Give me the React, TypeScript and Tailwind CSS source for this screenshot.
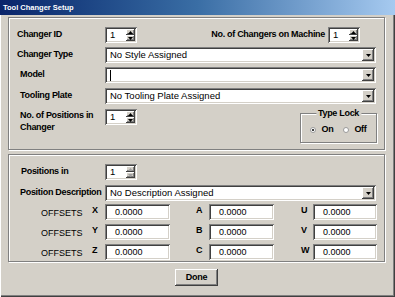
import React from 'react';

// Win2000-style 3D borders
const SUNKEN =
  'bg-white shadow-[inset_1px_1px_0_#808080,inset_-1px_-1px_0_#ffffff,inset_2px_2px_0_#404040,inset_-2px_-2px_0_#d4d0c8]';
const RAISED =
  'bg-[#d4d0c8] shadow-[inset_-1px_-1px_0_#404040,inset_1px_1px_0_#ffffff,inset_-2px_-2px_0_#808080,inset_2px_2px_0_#d4d0c8]';
const ETCHED = 'border border-[#808080] shadow-[1px_1px_0_#ffffff,inset_1px_1px_0_#ffffff]';

const LABEL = 'font-bold text-[9px] tracking-[-0.3px] text-black whitespace-nowrap';

function Arrow({ dir, disabled }: { dir: 'up' | 'down'; disabled?: boolean }) {
  const color = disabled ? '#a0a0a0' : '#000000';
  return (
    <svg width="5" height="3" viewBox="0 0 5 3">
      {dir === 'up' ? <path d="M2.5 0L5 3H0Z" fill={color} /> : <path d="M0 0H5L2.5 3Z" fill={color} />}
    </svg>
  );
}

function Spinner({ value, disabled }: { value: string; disabled?: boolean }) {
  return (
    <div className={`${SUNKEN} w-[32px] h-[16px] flex shrink-0`}>
      <div className="flex-1 pl-[5px] flex items-center text-[9.5px] leading-none">{value}</div>
      <div className="w-[11px] py-[2px] pr-[2px] flex flex-col">
        <div className={`${RAISED} flex-1 flex items-center justify-center`}>
          <Arrow dir="up" disabled={disabled} />
        </div>
        <div className={`${RAISED} flex-1 flex items-center justify-center`}>
          <Arrow dir="down" disabled={disabled} />
        </div>
      </div>
    </div>
  );
}

function Dropdown({ value, caret }: { value: string; caret?: boolean }) {
  return (
    <div className={`${SUNKEN} w-[271px] h-[16px] flex shrink-0`}>
      <div className="flex-1 pl-[5px] flex items-center text-[9.5px] leading-none whitespace-nowrap">
        {caret ? <span className="w-px h-[11px] bg-black" /> : value}
      </div>
      <div className="p-[2px] flex">
        <div className={`${RAISED} w-[12px] flex items-center justify-center`}>
          <Arrow dir="down" />
        </div>
      </div>
    </div>
  );
}

function ValueBox({ value, w = 'w-[65px]' }: { value: string; w?: string }) {
  return (
    <div className={`${SUNKEN} ${w} h-[16px] flex items-center pl-[10px] text-[9px] leading-none shrink-0`}>
      {value}
    </div>
  );
}

function Radio({ checked, label }: { checked?: boolean; label: string }) {
  return (
    <div className="flex items-center gap-[5px]">
      <div className="w-[6px] h-[6px] rounded-full bg-white border border-[#9a9a9a] flex items-center justify-center">
        {checked && <div className="w-[2px] h-[2px] rounded-full bg-black" />}
      </div>
      <span className={LABEL}>{label}</span>
    </div>
  );
}

const OFFSET_ROWS = [
  ['X', 'A', 'U'],
  ['Y', 'B', 'V'],
  ['Z', 'C', 'W'],
];

export default function App() {
  return (
    <div
      className="w-[395px] h-[297px] bg-[#d4d0c8] overflow-hidden flex flex-col shadow-[inset_1px_1px_0_#ffffff,inset_-1px_-1px_0_#404040,inset_-2px_-2px_0_#808080]"
      style={{ fontFamily: '"Liberation Sans", Arial, sans-serif' }}
    >
      {/* title bar */}
      <div className="h-[15px] bg-gradient-to-r from-[#0a246a] via-[#3a6ea5] to-[#a6caf0] flex items-center pl-[3px]">
        <span className="text-white font-bold text-[7.5px] leading-none whitespace-nowrap">Tool Changer Setup</span>
      </div>

      {/* changer group */}
      <div className={`${ETCHED} w-[377px] h-[133px] ml-[8px] mt-[2px] flex flex-col`}>
        <div className="mt-[9px] h-[16px] flex items-center pl-[8px] pr-[24px]">
          <div className={`${LABEL} w-[88px]`}>Changer ID</div>
          <Spinner value="1" />
          <div className="flex-1" />
          <div className={`${LABEL} mr-[3px]`}>No. of Changers on Machine</div>
          <Spinner value="1" />
        </div>
        <div className="mt-[4px] h-[16px] flex items-center pl-[8px]">
          <div className={`${LABEL} w-[88px]`}>Changer Type</div>
          <Dropdown value="No Style Assigned" />
        </div>
        <div className="mt-[4px] h-[16px] flex items-center pl-[8px]">
          <div className={`${LABEL} w-[88px] pl-[3px]`}>Model</div>
          <Dropdown value="" caret />
        </div>
        <div className="mt-[5px] h-[16px] flex items-center pl-[8px]">
          <div className={`${LABEL} w-[88px] pl-[3px]`}>Tooling Plate</div>
          <Dropdown value="No Tooling Plate Assigned" />
        </div>
        <div className="mt-[5px] flex items-start pl-[8px] pr-[7px]">
          <div className={`${LABEL} w-[88px] pl-[3px] leading-[12px]`}>
            No. of Positions in
            <br />
            Changer
          </div>
          <Spinner value="1" />
          <div className="flex-1" />
          <div className={`${ETCHED} relative mt-[4px] w-[77px] h-[30px] flex items-center justify-center gap-[10px] pt-[3px]`}>
            <div className={`${LABEL} absolute -top-[7px] left-1/2 -translate-x-1/2 bg-[#d4d0c8] px-[2px] leading-[12px]`}>
              Type Lock
            </div>
            <Radio checked label="On" />
            <Radio label="Off" />
          </div>
        </div>
      </div>

      {/* positions group */}
      <div className={`${ETCHED} w-[377px] h-[108px] ml-[8px] mt-[4px] flex flex-col`}>
        <div className="mt-[9px] h-[16px] flex items-center pl-[12px]">
          <div className={`${LABEL} w-[84px]`}>Positions in</div>
          <Spinner value="1" disabled />
        </div>
        <div className="mt-[5px] h-[16px] flex items-center pl-[11px]">
          <div className={`${LABEL} w-[85px]`}>Position Description</div>
          <Dropdown value="No Description Assigned" />
        </div>
        {OFFSET_ROWS.map((row, i) => (
          <div key={row[0]} className={`${i === 0 ? 'mt-[3px]' : 'mt-[4px]'} h-[16px] flex items-center pl-[32px]`}>
            <div className="w-[51px] text-[9px] leading-none whitespace-nowrap mt-[3px]">OFFSETS</div>
            <div className={`${LABEL} w-[13px] -mt-[3px]`}>{row[0]}</div>
            <ValueBox value="0.0000" />
            <div className={`${LABEL} w-[13px] ml-[26px] -mt-[3px]`}>{row[1]}</div>
            <ValueBox value="0.0000" />
            <div className={`${LABEL} w-[12px] ml-[27px] -mt-[3px]`}>{row[2]}</div>
            <ValueBox value="0.0000" w="w-[64px]" />
          </div>
        ))}
      </div>

      <div className="mt-[7px] ml-[175px]">
        <button className={`${RAISED} w-[43px] h-[17px] flex items-center justify-center ${LABEL}`}>Done</button>
      </div>
    </div>
  );
}
